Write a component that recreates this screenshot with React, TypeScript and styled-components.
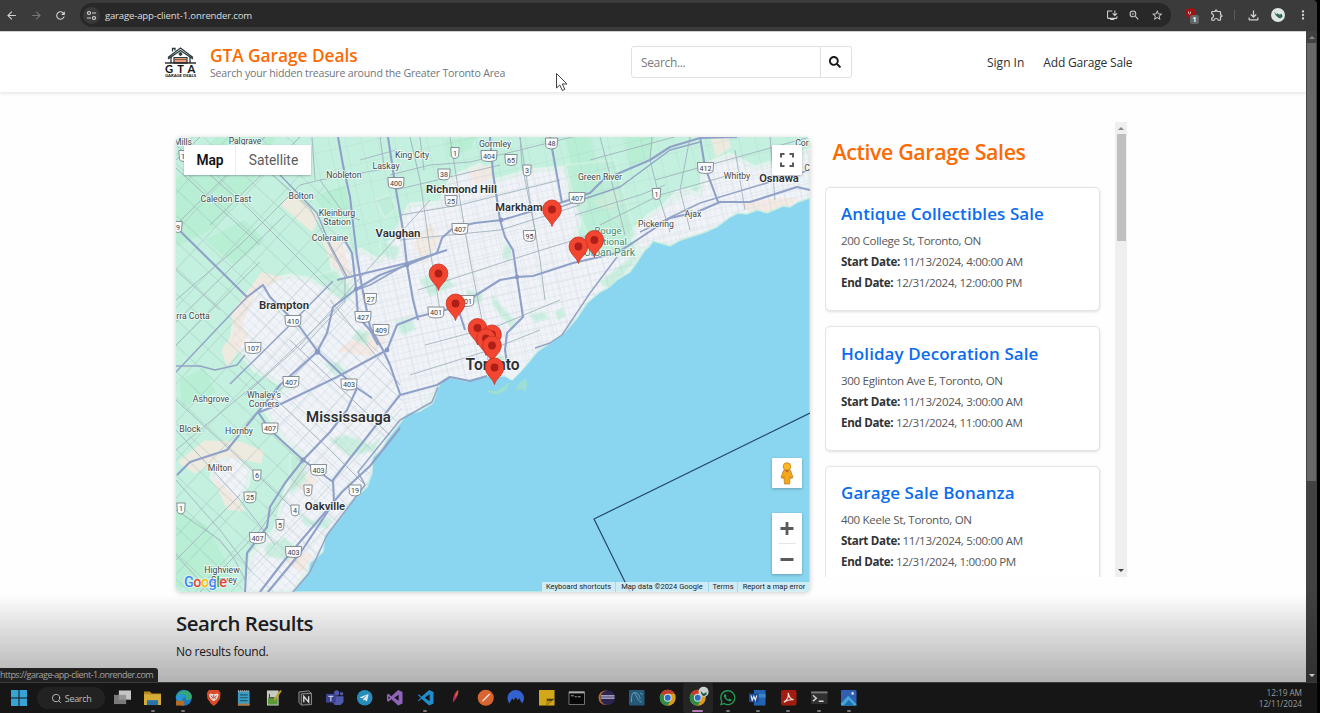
import React from 'react';
import styled, { createGlobalStyle } from 'styled-components';
import { Search } from 'lucide-react';
import { FaSearch, FaWhatsapp, FaTelegramPlane } from 'react-icons/fa';
import {
  MdArrowBack, MdArrowForward, MdRefresh, MdInstallDesktop, MdZoomIn, MdStarOutline, MdOutlineExtension,
  MdOutlineFileDownload, MdMoreVert,
} from 'react-icons/md';

const Global = createGlobalStyle`
  * { box-sizing: border-box; }
  body { margin: 0; background: #000; overflow: hidden; font-family: "Open Sans", "Noto Sans", sans-serif; }
  h1, h2, h3, p { margin: 0; }
`;

const Screen = styled.div`
  width: 1320px; height: 713px; display: flex; flex-direction: column;
  position: relative; overflow: hidden; background: #000;
`;

/* Browser bar */
const BrowserBar = styled.div`
  height: 31px; width: 1317px; flex: none; display: flex; align-items: center;
  background: #3b3b3b; padding: 0 7px 1px 5px; color: #d2d2d2; border-radius: 0 4px 0 0;
`;
const NavIcons = styled.div`
  display: flex; width: 75px; gap: 11.5px; align-items: center;
`;
const AddressBar = styled.div`
  width: 1093px; height: 24px; border-radius: 12px; background: #282828;
  display: flex; align-items: center; padding: 0 8px 0 3px;
`;
const SiteBadge = styled.span`
  width: 17px; height: 17px; border-radius: 50%; background: #3a3a3a;
  display: flex; align-items: center; justify-content: center; margin-right: 5px;
`;
const Url = styled.span`
  font-size: 9.6px; color: #dedede; flex: 1; letter-spacing: -0.17px;
`;
const AddressActions = styled.div`display: flex; gap: 10px; align-items: center;`;
const Extensions = styled.div`
  display: flex; align-items: center; flex: 1; padding-left: 14px;
`;
const Shield = styled.span`
  position: relative; width: 13px; height: 14px; margin-right: 12px; display: flex; align-items: flex-start;
`;
const ShieldCount = styled.b`
  position: absolute; left: 5px; top: 7px; width: 9px; height: 9px; border-radius: 2px;
  background: #666; color: #fff; font-size: 7px; line-height: 9px; text-align: center;
`;
const Divider = styled.i`width: 1px; height: 10px; background: #5b5b5b; margin: 0 11px 0 10px;`;
const Avatar = styled.span`margin: 0 11px 0 10px; display: flex;`;

/* Page */
const Viewport = styled.div`height: 651px; width: 1317px; flex: none; display: flex; background: #3a3a3a;`;
const Page = styled.div`
  width: 1306px; height: 651px; background: #fefefe; overflow: hidden; position: relative;
  border-top: 1px solid #d0d0d0;
`;
const Dimmer = styled.div`
  position: absolute; left: 0; right: 0; top: 562px; bottom: 0;
  background: linear-gradient(rgba(0,0,0,0), rgba(0,0,0,0.09) 28%, rgba(0,0,0,0.30)); pointer-events: none;
`;
const PageScroll = styled.div`
  width: 11px; display: flex; flex-direction: column; align-items: center; justify-content: space-between;
  background: linear-gradient(#424242 0 85%, #303030); padding-bottom: 2px;
`;
const PageThumb = styled.div`width: 9px; height: 438px; background: #686868; margin-bottom: auto;`;
const Arrow = styled.i<{ $down?: boolean; $color: string; $h: number }>`
  height: ${p => p.$h}px; display: flex; align-items: center;
  &::before {
    content: ""; border: 3px solid transparent;
    border-${p => (p.$down ? 'top' : 'bottom')}: 3px solid ${p => p.$color};
    border-${p => (p.$down ? 'bottom' : 'top')}: 0;
  }
`;

const Header = styled.header`
  height: 60px; background: #fff; box-shadow: 0 1px 4px rgba(0,0,0,0.13); position: relative;
  display: flex; align-items: center; padding-left: 164px;
`;
const Brand = styled.div`display: flex; width: 467px; gap: 13px; align-items: center;`;
const BrandText = styled.div`display: flex; flex-direction: column; padding-top: 3px;`;
const BrandName = styled.h1`
  font-size: 17.3px; line-height: 20px; font-weight: 600; color: #fa6b03; letter-spacing: -0.03px; white-space: nowrap;
`;
const Tagline = styled.p`
  font-size: 10.6px; line-height: 15px; color: #6f767c; white-space: nowrap; letter-spacing: -0.2px;
`;
const SearchBox = styled.div`
  width: 221px; height: 32px; border: 1px solid #dfe1e4; border-radius: 3px; display: flex;
  font-size: 12px; color: #777b80; align-items: center; letter-spacing: -0.35px;
`;
const SearchInput = styled.div`flex: 1; padding: 1px 0 0 9px; line-height: 30px;`;
const SearchButton = styled.div`
  width: 31px; height: 30px; border-left: 1px solid #dfe1e4; display: flex; align-items: center;
  justify-content: center; color: #17191c; padding-right: 2px;
`;
const Links = styled.nav`
  display: flex; gap: 19px; margin-left: 135px; font-size: 12px; color: #2b2f33; white-space: nowrap; padding-top: 1px;
`;
const NavLink = styled.span<{ $tight?: boolean }>`letter-spacing: ${p => (p.$tight ? -0.18 : 0)}px;`;

const Main = styled.main`
  display: flex; gap: 15px; align-items: flex-start; padding: 30px 0 0 176px;
`;
const MapBox = styled.section`
  width: 634px; height: 455px; margin-top: 15px; border-radius: 5px; overflow: hidden; position: relative;
  box-shadow: 0 1px 5px rgba(0,0,0,0.2); font-family: Roboto, sans-serif;
`;
const MapTypes = styled.div`
  position: absolute; left: 8px; top: 8px; height: 30px; display: flex; background: #fff;
  box-shadow: 0 1px 2px rgba(0,0,0,0.25); border-radius: 1px; align-items: center;
`;
const MapType = styled.span<{ $on?: boolean; $w: number }>`
  width: ${p => p.$w}px; text-align: center; font-size: 13.8px; line-height: 30px;
  font-weight: ${p => (p.$on ? 600 : 400)}; color: ${p => (p.$on ? '#111' : '#5b5b5b')};
  border-left: 1px solid ${p => (p.$on ? 'transparent' : '#eee')};
`;
const MapControl = styled.div<{ $top: number; $h?: number }>`
  position: absolute; left: 596px; top: ${p => p.$top}px; width: 30px; height: ${p => p.$h ?? 30}px;
  background: #fff; border-radius: 1px; box-shadow: 0 1px 3px rgba(0,0,0,0.25);
  display: flex; flex-direction: column; align-items: center; justify-content: center;
`;
const GoogleMark = styled.div`
  position: absolute; left: 8px; bottom: 0; font: 500 14.5px/19px Roboto, sans-serif; letter-spacing: -0.6px;
  text-shadow: 0 0 2px #fff, 0 0 2px #fff;
`;
const GLetter = styled.span<{ $c: string }>`color: ${p => p.$c};`;
const Attribution = styled.div`
  position: absolute; right: 0; bottom: 0; height: 10px; display: flex; background: rgba(225,241,247,0.78);
  font-size: 7.5px; line-height: 10px; color: #222; white-space: nowrap;
`;
const Attr = styled.span<{ $w: number }>`
  width: ${p => p.$w}px; text-align: center; border-left: 1px solid rgba(150,205,225,0.7);
  &:first-child { border-left: 0; }
`;

const Sidebar = styled.aside`
  width: 302px; height: 455px; overflow: hidden; display: flex; justify-content: space-between;
`;
const SaleList = styled.div`width: 275px; padding: 16px 0 0; flex: none;`;
const SaleHeading = styled.h2`
  font-size: 21.4px; line-height: 28px; font-weight: 600; color: #fa6b03; padding-left: 7.5px; margin-bottom: 20.5px;
  white-space: nowrap; letter-spacing: -0.4px;
`;
const Card = styled.article`
  height: 124.5px; border: 1px solid #e4e4e4; border-radius: 5px; background: #fff; margin-bottom: 15px;
  box-shadow: 0 1px 3px rgba(0,0,0,0.13); padding: 14.5px 15px; white-space: nowrap;
`;
const CardTitle = styled.h3`
  font-size: 17px; line-height: 24px; font-weight: 600; color: #0b6cee; margin-bottom: 4.2px; letter-spacing: 0.08px;
`;
const CardLine = styled.p`
  font-size: 11.6px; line-height: 21px; color: #55585b; letter-spacing: -0.33px;
  b { color: #303336; font-weight: 700; }
`;
const SideScroll = styled.div`
  width: 12px; height: 455px; background: #efefef; display: flex; flex-direction: column; align-items: center;
`;
const SideThumb = styled.div`width: 9px; height: 107px; background: #c0c0c0; margin-bottom: auto;`;

const Results = styled.section`padding: 15px 0 0 176px; color: #1c2126;`;
const ResultsTitle = styled.h2`font-size: 20.4px; line-height: 32px; font-weight: 600; letter-spacing: -0.45px;`;
const ResultsText = styled.p`font-size: 12px; line-height: 18px; margin-top: 4px; letter-spacing: -0.25px;`;

const StatusTip = styled.div`
  position: absolute; left: 0; top: 668px; width: 158px; height: 14px; background: #212121; color: #a3a3a3;
  font-size: 9px; line-height: 14px; border-top-right-radius: 3px; white-space: nowrap; letter-spacing: -0.52px;
`;
const Cursor = styled.svg`position: absolute; left: 555px; top: 72px;`;

const Taskbar = styled.footer`
  height: 31px; flex: none; background: #161616; border-top: 1px solid #3b3b3b; display: flex; align-items: center;
  padding-left: 4px; position: relative; width: 1317px;
`;
const TaskSlot = styled.div<{ $active?: boolean }>`
  width: 30.25px; height: 30px; display: flex; align-items: center; justify-content: center;
  flex: none; background: ${p => (p.$active ? '#242424' : 'transparent')}; border-radius: 3px; position: relative;
`;
const RunningMark = styled.i<{ $active?: boolean }>`
  position: absolute; bottom: 1px; width: ${p => (p.$active ? 11 : 4)}px; height: 2px; border-radius: 1px;
  background: ${p => (p.$active ? '#b57bb8' : '#777')};
`;
const TaskSearch = styled.div`
  width: 68px; height: 22px; border-radius: 11px; background: #222; display: flex; align-items: center; gap: 3px;
  margin: 0 3px 0 2.5px; padding-left: 14px; color: #bdbdbd; font-size: 9px; flex: none; letter-spacing: -0.3px;
`;
const Clock = styled.div`
  margin-left: auto; padding-right: 15px; text-align: right; font-size: 8.3px; line-height: 11px; color: #9b9b9b;
  white-space: nowrap; letter-spacing: -0.08px;
`;

const WATER = 'M810 198 L798 202 790 207 783 206 767 213 757 210 747 214 738 213 730 217 717 227 703 233 690 237 681 240 670 246 660 243 653 241 649 247 645 250 637 262 630 272 617 280 608 288 600 292 587 303 577 318 565 332 550 343 537 352 528 363 520 372 512 380 505 376 487 376 467 381 447 377 440 384 437 390 433 403 420 411 407 414 397 427 387 440 381 450 373 457 372 473 367 487 356 497 350 503 340 518 325 536 323 552 310 563 308 573 293 592 810 592Z';

const URBAN = [
  'M395 235 L410 205 440 203 452 178 480 165 492 182 530 171 565 168 568 195 585 205 576 232 580 245 612 258 645 250 560 350 500 380 440 385 370 480 293 592 245 592 252 555 275 530 290 480 305 455 285 440 262 405 290 388 255 370 232 340 236 312 258 283 290 276 320 282 350 280 360 250 380 262Z',
  'M640 250 L630 235 650 215 690 190 665 205 680 190 700 195 705 165 730 155 755 168 780 160 810 150 810 205 720 228 680 243Z',
  'M215 462 L233 455 250 470 247 485 235 505 224 490 212 478Z',
  'M344 240 L355 260 352 285 334 272 330 250Z',
];

const SAND = [
  'M283 205 L292 192 317 217 312 230Z', 'M232 315 L262 274 280 278 255 290 236 335Z', 'M223 350 L240 325 247 335 228 365Z',
  'M180 462 L205 442 240 443 262 452 260 462 225 455 195 472Z', 'M215 480 L237 500 243 510 228 508Z',
  'M415 245 L430 225 438 240 425 262Z', 'M340 350 L362 335 385 340 370 355Z', 'M595 202 l20 -12 8 12 -14 8Z',
  'M743 204 L775 200 795 199 780 212 755 214Z', 'M285 553 L310 555 302 570 288 562Z', 'M323 240 l15 -5 12 40 -15 -8Z',
  'M470 172 l20 -6 3 10 -18 8Z', 'M300 470 l15 10 -8 10 -12 -4Z', 'M712 137 l15 0 2 10 -12 8Z',
];

const PARKS = [
  'M310 277 L335 270 355 292 345 302 320 285Z', 'M265 545 L285 538 300 550 288 560 266 556Z', 'M330 440 L345 435 372 445 380 438 375 450 350 456Z',
  'M380 240 l20 8 -5 12 -14 -6Z', 'M357 330 l12 3 -2 12 -14 -6Z', 'M375 200 l14 -6 8 14 -12 10Z', 'M300 515 l12 6 20 -3 -5 10 -22 -3Z',
  'M420 280 l22 -12 12 18 -24 10Z', 'M530 315 l14 -3 4 6 -12 4Z', 'M555 312 l7 -4 3 8 -7 4Z', 'M492 295 l10 12 14 15 -3 8 -20 -25Z',
  'M600 282 L640 250 634 262 610 290Z', 'M565 165 l50 -5 20 75 -15 12 -28 -4 -14 -30Z', 'M727 235 l8 -22 6 4 -4 12Z', 'M450 395 l-10 -10 8 -4 6 5Z',
  'M290 455 l14 3 2 22 -15 14Z', 'M467 290 l16 4 -4 10 -12 -4Z', 'M505 245 l8 2 -4 14 -6 -4Z', 'M395 322 l16 -5 4 12 -12 6Z', 'M325 363 l14 0 8 10 -12 2Z', 'M495 355 l9 2 3 12 -8 -3Z',
];

const SHADE = [
  'M176 180 l40 -43 60 0 -20 40 -40 50 -40 20Z', 'M315 197 l30 -12 6 30 -20 10Z', 'M176 510 l30 15 25 45 -20 22 -35 -5Z',
  'M565 137 l24 0 20 80 20 15 -35 20 -10 -30Z', 'M445 140 l30 -3 -4 12 -22 8Z', 'M625 137 l30 0 -5 20 -20 10Z', 'M205 240 l40 -20 20 20 -30 25Z', 'M180 380 l24 -12 12 24 -34 16Z',
];

const MAJOR = [
  '388 137 396 190 403 230 407 265 413 300 418 320',
  '338 137 343 165 350 197 357 257 362 287 370 327 383 350 390 365 400 394',
  '343 237 352 253 356 287 358 317 370 330 378 345',
  '810 190 797 187 750 202 720 202 697 212 670 218 637 240 617 253 573 263 533 276 517 277 500 280 473 297 453 308 417 317 397 325 387 350 337 377 283 403 257 413 227 450 190 462 177 475',
  '737 137 700 138 670 147 650 160 603 180 590 193 560 203 502 220 475 223 453 228 442 238 437 253 407 265 380 275 355 290 333 307 327 333 317 352 280 385 258 412 270 430 303 460 285 483 270 507 267 527 247 553 245 592',
  '490 137 493 173 500 220 505 237 513 250 517 277 523 317 507 333 505 350 508 368',
  '176 227 247 297 263 285 270 297 300 327 318 352 340 373 357 388 372 398',
  '260 592 283 562 327 510 342 492 370 466 400 428',
  '268 592 301 552 334 502 333 480 370 433 400 395 437 385 450 377 470 381 487 376',
  '357 388 347 410 330 432 303 460', '303 460 333 482',
  '700 137 705 167 718 202', '550 137 562 203',
  '337 280 407 263 447 250', '458 308 465 330',
];

const SECONDARY = [
  '617 257 590 293 570 323 562 335 550 343 535 348', '280 175 317 213 330 245 347 277', '247 297 176 372', '333 281 285 330 230 384',
  '176 366 200 366 215 370 237 365 245 355', '640 232 700 203 810 170', '560 207 620 187 670 150 700 142', '405 265 370 285 356 290',
  '293 592 310 572 327 535 365 485 358 472 400 420 432 402 438 387',
];

const MEDIUM = [
  '176 145 250 210 330 290', '176 168 260 245', '230 137 310 208 345 277', '176 270 220 310', '176 300 240 245 300 185 320 180 390 168',
  '176 345 260 262', '176 322 285 215', '200 137 176 160', '265 137 176 225', '300 137 210 225', '430 200 300 345 245 395',
  '360 220 345 215 320 180', '176 400 225 445 300 515', '176 430 240 500 275 545', '176 480 220 530 250 570', '176 510 220 540 235 560 245 580',
  '200 592 260 530 310 460', '176 560 240 495', '210 592 176 555', '176 450 260 380 345 300', '240 366 330 450 365 485', '290 340 400 445',
  '317 352 270 400', '345 277 345 302 300 350', '330 300 400 385', '395 190 500 165', '410 137 420 180 430 250 440 310', '450 137 460 200 470 260 482 320 488 360',
  '520 137 530 200 540 260 545 300', '520 137 522 165 535 230', '390 175 430 165 470 162 520 150 600 130', '400 215 460 205 560 180', '600 137 610 175 625 235',
  '652 137 650 160 660 200 670 232', '590 160 700 130', '600 225 660 195 740 172', '420 137 424 170', '575 215 640 195 665 185', '690 137 680 190 690 230', '735 150 745 210',
  '770 137 775 200', '400 240 500 230 580 205', '418 290 510 260 590 235', '425 345 500 325 560 300', '410 375 490 350 540 330',
  '380 137 384 165', '312 137 315 180', '360 160 396 150', '655 180 810 137',
];

type Label = [string, number, number, number, boolean?, string?];
const LABELS: Label[] = [
  ['Mills', 183, 145, 8.5], ['Palgrave', 245, 143.5, 8.5], ['Caledon East', 226, 202, 8.7], ['Nobleton', 344, 177.5, 8.7], ['Bolton', 301, 199, 8.7],
  ['Kleinburg', 337, 216, 8.7], ['Station', 337, 225, 8.7], ['Coleraine', 330, 241, 8.7], ['Laskay', 386, 169, 8.7], ['King City', 412, 157.5, 8.7],
  ['Richmond Hill', 461.5, 192.5, 11.3, true], ['Vaughan', 398, 237, 11.4, true], ['Markham', 519, 211, 11.1, true], ['Brampton', 284, 309, 11.4, true],
  ['rra Cotta', 193, 319, 8.7], ['Ashgrove', 211, 402, 8.7], ['Whaley\u2019s', 264, 398, 8.7], ['Corners', 264, 407, 8.7], ['Block', 190, 432, 8.7],
  ['Hornby', 239, 434, 8.7], ['Milton', 220, 471, 8.7], ['Mississauga', 348.5, 422, 15, true], ['Oakville', 325, 510, 11.3, true],
  ['Highview', 222, 573, 8.7], ['Survey', 224, 582.5, 8.7], ['Gormley', 495, 147, 8.7], ['Green River', 600, 180, 8.7], ['Whitby', 737, 179, 8.7],
  ['Osnawa', 779, 182, 11.1, true], ['Ajax', 693, 217, 8.7], ['Pickering', 656, 226.5, 8.7], ['Cor', 802, 146, 8.7], ['C', 807, 171, 8.7],
  ['Rouge', 608, 234, 9.6, false, '#3d8c73'], ['National', 609, 245, 9.6, false, '#3d8c73'], ['Urban Park', 609.5, 255.5, 10.4, false, '#3d8c73'],
  ['Toronto', 492.5, 370, 15.6, true],
];

type RoadSign = [string, number, number];
const SIGNS: RoadSign[] = [
  ['1', 183, 156], ['400', 396, 183], ['38', 444, 174.5], ['1', 455, 153], ['404', 489, 156], ['65', 511, 160], ['3', 527, 170.5], ['48', 551.5, 143.5],
  ['25', 451, 201], ['407', 460, 229], ['407', 577, 198], ['1', 656.5, 194], ['412', 705.5, 168], ['95', 529.5, 236], ['27', 370.5, 299], ['427', 363, 317],
  ['409', 381, 330], ['410', 293, 321], ['107', 253, 348], ['401', 436, 312.5], ['401', 466, 301], ['407', 291, 382], ['403', 349, 384.5], ['407', 270, 428.5],
  ['403', 318.5, 470], ['3', 308, 490.5], ['19', 355, 490.5], ['6', 257, 475.5], ['25', 250, 497.5], ['1', 181, 508.5], ['4', 295, 510.5],
  ['5', 280, 525], ['407', 257.5, 538], ['403', 293.5, 552], ['9', 178, 227],
];

const PINS: [number, number][] = [
  [552, 226.5], [594.3, 257], [578.4, 263.5], [438.5, 290.5], [455.5, 320.5], [477.5, 345], [492, 351.5], [486, 355.5], [492, 362.5], [494.5, 384.5],
];

function MapDrawing() {
  return (
    <svg width="634" height="455" viewBox="176 137 634 455" display="block">
      <defs>
        <pattern id="westFine" width="6.5" height="8" patternUnits="userSpaceOnUse" patternTransform="rotate(-47)">
          <path d="M0 0H6.5M0 0V8" stroke="#ccd1de" strokeWidth=".6" />
        </pattern>
        <pattern id="westCoarse" width="19" height="26" patternUnits="userSpaceOnUse" patternTransform="rotate(-47)">
          <path d="M0 0H19M0 0V26" stroke="#96afae" strokeWidth="1" />
        </pattern>
        <pattern id="eastFine" width="5.5" height="7" patternUnits="userSpaceOnUse" patternTransform="rotate(-13)">
          <path d="M0 0H5.5M0 0V7" stroke="#d3d8e2" strokeWidth=".6" />
        </pattern>
        <pattern id="eastCoarse" width="16" height="20" patternUnits="userSpaceOnUse" patternTransform="rotate(-13)">
          <path d="M0 0H16M0 0V20" stroke="#a2b5ba" strokeWidth=".8" />
        </pattern>
        <clipPath id="urbanClip">{URBAN.map(d => <path key={d} d={d} />)}</clipPath>
        <clipPath id="west"><path d="M176 137H300L352 250 372 330 402 400 400 592H176Z" /></clipPath>
        <clipPath id="east"><path d="M300 137H810V592H400L402 400 372 330 352 250Z" /></clipPath>
        <g id="pin">
          <path d="M0 0C-1.2-6-9.3-9.3-9.3-17.2A9.3 9.3 0 0 1 9.3-17.2C9.3-9.3 1.2-6 0 0Z" fill="#f34631" stroke="#c5301f" strokeWidth=".8" />
          <circle cy="-17" r="3.900" fill="#ad1f17" />
        </g>
      </defs>
      <rect x="176" y="137" width="634" height="455" fill="#c4f1df" />
      {SHADE.map(d => <path key={d} d={d} fill="#b3eccf" opacity=".7" />)}
      {URBAN.map(d => <path key={d} d={d} fill="#f0f3f8" stroke="#e4f2ee" strokeWidth="5" strokeLinejoin="round" />)}
      {SAND.map(d => <path key={d} d={d} fill="#f5e9e0" stroke="#f5e9e0" strokeWidth="3" strokeLinejoin="round" opacity=".85" />)}
      {PARKS.map(d => <path key={d} d={d} fill="#bdeed7" opacity=".75" stroke="#d3f2e4" strokeWidth="2" strokeLinejoin="round" />)}
      <g clipPath="url(#west)">
        <rect x="176" y="137" width="634" height="455" fill="url(#westCoarse)" opacity=".6" />
        <g clipPath="url(#urbanClip)"><rect x="176" y="137" width="634" height="455" fill="url(#westFine)" /></g>
      </g>
      <g clipPath="url(#east)">
        <rect x="176" y="137" width="634" height="455" fill="url(#eastCoarse)" opacity=".42" />
        <g clipPath="url(#urbanClip)"><rect x="176" y="137" width="634" height="455" fill="url(#eastFine)" /></g>
      </g>
      <g fill="none" stroke="#a3b3be" strokeWidth=".9">{MEDIUM.map(p => <polyline key={p} points={p} />)}</g>
      <path d={WATER} fill="#8ad5ef" stroke="#c5eee2" strokeWidth="1.4" />
      <path d="M487 390q7 4 12 0q6-3 10-7q-2 7-9 10q-8 2-13-3zM516 390l3-6 6-5q3 5 0 12l-4-3z" fill="#9bdedb" stroke="#a5e3c4" strokeWidth="1" />
      <path d="M505 376l7 4 8-8 6-7-12-2z" fill="#eef2f5" />
      <g fill="none" stroke="#95a4c6" strokeWidth="1.5" strokeLinejoin="round">{SECONDARY.map(p => <polyline key={p} points={p} />)}</g>
      <g fill="none" stroke="#90a1c9" strokeWidth="2.1" strokeLinejoin="round">{MAJOR.map(p => <polyline key={p} points={p} />)}</g>
      <g fill="#8898c4">
        <circle cx="407" cy="265" r="2.4" /><circle cx="317.5" cy="352" r="2.8" /><circle cx="356" cy="289" r="2.3" />
        <circle cx="387" cy="350" r="2.4" /><circle cx="303" cy="460" r="2.5" /><circle cx="517" cy="277" r="2.3" /><circle cx="501" cy="220" r="2.4" />
      </g>
      <polyline points="810,413 594,519 625,582 630,592" fill="none" stroke="#24476a" strokeWidth="1.2" />
      <g textAnchor="middle" fontFamily="Roboto, sans-serif">
        {SIGNS.map(([t, x, y], i) => {
          const w = t.length * 3.9 + 4.5;
          return (
            <g key={i} transform={`translate(${x} ${y})`}>
              <path d={`M${-w / 2} -5.5H${w / 2}L${w / 2 - 0.6} 3Q${w / 2 - 1} 5.2 0 5.5Q${-w / 2 + 1} 5.2 ${-w / 2 + 0.6} 3Z`} fill="#fafbfc" stroke="#7c838a" strokeWidth=".9" />
              <text y="2.7" fontSize="7.2" fill="#3f4347">{t}</text>
            </g>
          );
        })}
        {LABELS.map(([t, x, y, s, bold, c]) => (
          <text key={t} x={x} y={y} fontSize={s} fontWeight={bold ? 600 : 400} fill={c ?? (bold ? '#2c3033' : '#45494c')}
            stroke="#fff" strokeOpacity=".7" strokeWidth="1.8" paintOrder="stroke">{t}</text>
        ))}
      </g>
      {PINS.map(([x, y]) => <use key={`${x}-${y}`} href="#pin" x={x} y={y} />)}
    </svg>
  );
}

const Logo = () => (
  <svg width="33" height="32" viewBox="0 0 33 32" fill="none" stroke="#2b3a3d">
    <path d="M4 11.5 16.5 2 29 11.5M4 13 16.5 4.500 29 13" strokeWidth="1.3" />
    <path d="M8.500 5.500V2.500h2.500v2M7 11v6M26 11v6" strokeWidth="1.3" />
    <circle cx="16.5" cy="8" r="1.4" fill="#2b3a3d" />
    <path d="M10 17v-5.5h13V17z" fill="#eda07e" strokeWidth="1.2" />
    <path d="M11 13.5h11" stroke="#333" strokeWidth=".6" />
    <path d="M1 17h31" stroke="#111" strokeWidth="1.3" />
    <g fill="#151515" stroke="none" fontFamily="Lato, sans-serif" textAnchor="middle" fontWeight="700">
      <text x="5" y="26.8" fontSize="11.2">G</text><text x="16.5" y="26.8" fontSize="11.2">T</text><text x="27.5" y="26.8" fontSize="11.2">A</text>
      <text x="16.5" y="30.8" fontSize="4.2" fontWeight="900" textLength="31">GARAGE DEALS</text>
    </g>
  </svg>
);

const Chrome = () => (
  <g>
    <circle cx="9" cy="9" r="8.2" fill="#d99c1d" />
    <path d="M9 9 1.9 4.9A8.2 8.2 0 0 1 16.1 4.9H9Z" fill="#c53b2c" />
    <path d="M9 9 1.9 4.9A8.2 8.2 0 0 0 8.8 17.2L12.5 11Z" fill="#2c8b48" />
    <circle cx="9" cy="9" r="4" fill="#ddd" /><circle cx="9" cy="9" r="3" fill="#2c6cc9" />
  </g>
);

const ICONS: Record<string, React.ReactNode> = {
  windows: <g fill="#36a4d4"><path d="M1 1h7.500v7.500H1zM9.500 1H17v7.500H9.500zM1 9.500h7.500V17H1zM9.500 9.500H17V17H9.500z" /></g>,
  taskview: <g><path d="M5 1.500h12.500v9.500H5z" fill="#c5c5c5" /><path d="M0 6h12.500v9.500H0z" fill="#8c8c8c" opacity=".85" /></g>,
  folder: <g><path d="M0 2.500h6l2 2h9.500V16H0z" fill="#b8891d" /><path d="M0 5.500h17.500V16.500H0z" fill="#d6ab36" /><path d="M3 11.500h11.500v5H3z" fill="#2873ad" /></g>,
  edge: <g><circle cx="9" cy="9" r="8.3" fill="#1f79bd" /><path d="M1 8C3 1 13-1 16.500 5 19 11 15 12 11 11 13 7 9 5 6 6 3 6 1 8 1 8Z" fill="#38a777" /><path d="M1 8C5 3 12 5 11 9 9 8 7 9 7 13 3 14 1 11 1 8Z" fill="#2596d8" /><path d="M1 12h8.500v5H1z" fill="#b66c24" /></g>,
  brave: <g><path d="M4 1h10l2 3-.5 6L12 15l-3 2.500L6 15 2.500 10 2 4Z" fill="#d94b29" /><path d="m5 4.500 4 .8 4-.8 1 2-2 4-3 2-3-2-2-4Z" fill="#e5ddd8" /><path d="m6 7 2 1.500L7 10M12 7l-2 1.500 1 1.500M9 6v4" stroke="#c84427" fill="none" /></g>,
  notepad: <g><path d="M3 2h12v15H3z" fill="#3b9dc2" /><path d="M3 15h12v2H3z" fill="#b87a3b" /><path d="M5 6h8M5 9h8M5 12h8" stroke="#1b5873" strokeWidth="1.2" /><path d="M3 2h12" stroke="#aaa" strokeWidth="2" strokeDasharray="1 1" /></g>,
  notepp: <g><path d="M2 1.500h12V17H2z" fill="#c6ccc2" /><path d="M3 9h10v7H3z" fill="#5b9938" /><path d="M4.500 5v4h5" stroke="#333" fill="none" /><path d="m16.500 1.500-7 10" stroke="#c29e20" strokeWidth="2" /></g>,
  notion: <g><path d="m3 3 10-1 3 2.500V16L5.500 16.500 3 14Z" fill="#262626" stroke="#8d8d8d" /><path d="M5.500 5 16 4.500M5.500 5v11.500" stroke="#8d8d8d" /><path d="M8 13.500V7.500l5 6V7.500" fill="none" stroke="#ddd" strokeWidth="1.4" /></g>,
  teams: <g fill="#5059ad"><circle cx="11" cy="4" r="2.7" /><circle cx="16" cy="5" r="1.8" /><path d="M7 7.500h11v6l-3 3H9l-2-3Z" /><path d="M0 5h10v9H0z" fill="#3b4393" /><path d="M2.500 7.500h5M5 7.500v5" stroke="#ccd" strokeWidth="1.2" /></g>,
  telegram: <g><circle cx="9" cy="9" r="8" fill="#258cbc" /><FaTelegramPlane x="3.500" y="4" size={10} color="#dfe8ec" /></g>,
  vs: <path d="M12.500 1 17 3v12l-4.500 2-7-6.500L2.500 13 1 12V6l1.500-1 3 2.500ZM13 6 8.500 9 13 12ZM2.500 7.500v3L4.200 9Z" fill="#8f63b8" fillRule="evenodd" />,
  vscode: <path d="M12.500 1 17 3v12l-4.500 2-8-7L2 12.500 1 11.700 4 9 1 6.300 2 5.500 4.500 8ZM13 5.500 8 9l5 3.500Z" fill="#238bcb" fillRule="evenodd" />,
  feather: <g><path d="M6 14C6 8 8 3 11.500 1 12.500 4 10 10 6 14Z" fill="#b52e55" /><path d="M9 4.500 11.500 1 11 6 8 9Z" fill="#d5652b" /></g>,
  postman: <g><circle cx="9" cy="9" r="8.3" fill="#d8642f" /><path d="m4.500 13.500 2-3 6-6 1.300 1-6 6Z" fill="#eadcd4" /></g>,
  nord: <path d="M2.500 15A8.500 8.500 0 1 1 15.500 15L12.500 9.500l-1.500 2L9 8.500 7 11.500 5.500 9.500Z" fill="#3162cf" />,
  sticky: <g><path d="M1 1h16v16H1z" fill="#d2a719" /><path d="M9 17V10h8" fill="#4b3d16" /><path d="M9 17v-5h5z" fill="#b18b12" /></g>,
  cmd: <g><path d="M1 3h16v13H1z" fill="#070707" stroke="#777" /><path d="M1 3.500h16" stroke="#aaa" strokeWidth="2" /><path d="M3 7h3M7 8h2M10 8h3" stroke="#aaa" /></g>,
  eclipse: <g><circle cx="8" cy="9" r="7.5" fill="#b66c27" /><circle cx="10" cy="9" r="7.5" fill="#2b2552" /><path d="M3 7h14M3 9.500h14" stroke="#c6c0dc" strokeWidth="1.3" /></g>,
  mysql: <g><rect x="1" y="1" width="16" height="16" rx="1" fill="#24597a" /><path d="M3.500 13.500C3.500 7 4.500 3.500 6 4c3 1 3 8 8 9.500M6 4c4-1 6 3 6.500 6M12.500 4l2.500 1.500" fill="none" stroke="#6fa3ba" strokeWidth="1" /></g>,
  chrome: <Chrome />,
  profile: <g><Chrome /><circle cx="15" cy="3" r="5.2" fill="#c9d3cf" /><path d="m12 2 3 3 3-2v3l-3 1.500-2-1.500Z" fill="#28594e" /></g>,
  whatsapp: <FaWhatsapp size={18} color="#239e52" />,
  word: <g><path d="M5 1h12v16H5z" fill="#2463b1" /><path d="M5 5h12v4H5z" fill="#3c83cd" /><path d="M0 4.500h10v9H0z" fill="#174991" /><path d="m2 6.500 1.300 5L5 7.500l1.500 4 1.500-5" stroke="#e5e8ef" fill="none" strokeWidth="1.2" /></g>,
  acrobat: <g><rect x="1" y="1" width="16" height="16" rx="2" fill="#a31c11" /><path d="M4 13.500C8 11 9 8 8.500 4c.5 4 2 6.500 5.500 7-4-.5-7 .5-10 2.500Z" fill="none" stroke="#eaded9" strokeWidth="1.3" /></g>,
  terminal: <g><path d="M1 2.500h17v13H1z" fill="#303030" /><path d="M1 3.500h17" stroke="#777" strokeWidth="2" /><path d="m3 6.500 3.500 3L3 12.500M9 12.500h5" fill="none" stroke="#d0d0d0" strokeWidth="1.5" /></g>,
  photos: <g><rect x="1" y="1" width="16" height="16" rx="1.5" fill="#315fb2" /><path d="M1 15 8.500 7 17 16v1H1Z" fill="#45a7d5" /><path d="M4 17 9 11l5.500 6Z" fill="#1b70ae" /><circle cx="13" cy="4.500" r="1.4" fill="#d3d9e8" /></g>,
};
const TASKS: [string, boolean][] = [
  ['taskview', false], ['folder', true], ['edge', true], ['brave', false], ['notepad', false], ['notepp', false], ['notion', false], ['teams', false],
  ['telegram', false], ['vs', false], ['vscode', true], ['feather', false], ['postman', false], ['nord', false], ['sticky', false], ['cmd', false],
  ['eclipse', false], ['mysql', false], ['chrome', false], ['profile', true], ['whatsapp', true], ['word', true], ['acrobat', true], ['terminal', true], ['photos', true],
];

const SALES = [
  { title: 'Antique Collectibles Sale', where: '200 College St, Toronto, ON', start: '11/13/2024, 4:00:00 AM', end: '12/31/2024, 12:00:00 PM' },
  { title: 'Holiday Decoration Sale', where: '300 Eglinton Ave E, Toronto, ON', start: '11/13/2024, 3:00:00 AM', end: '12/31/2024, 11:00:00 AM' },
  { title: 'Garage Sale Bonanza', where: '400 Keele St, Toronto, ON', start: '11/13/2024, 5:00:00 AM', end: '12/31/2024, 1:00:00 PM' },
];

const GOOGLE: [string, string][] = [['G', '#4285f4'], ['o', '#ea4335'], ['o', '#fbbc05'], ['g', '#4285f4'], ['l', '#34a853'], ['e', '#ea4335']];

export default function App() {
  return (
    <Screen>
      <Global />
      <BrowserBar>
        <NavIcons>
          <MdArrowBack size={13} /><MdArrowForward size={13} color="#777" /><MdRefresh size={13} />
        </NavIcons>
        <AddressBar>
          <SiteBadge>
            <svg width="11" height="11" viewBox="0 0 11 11" fill="none" stroke="#d2d2d2" strokeWidth="1.2">
              <circle cx="3" cy="3" r="1.5" /><path d="M6 3h4M1 8h4" /><circle cx="8" cy="8" r="1.5" />
            </svg>
          </SiteBadge>
          <Url>garage-app-client-1.onrender.com</Url>
          <AddressActions><MdInstallDesktop size={12.5} /><MdZoomIn size={12.5} /><MdStarOutline size={12.5} /></AddressActions>
        </AddressBar>
        <Extensions>
          <Shield>
            <svg width="12" height="12" viewBox="0 0 12 12"><path d="M1 1.500 6 0l5 1.500V6q0 3-5 5.500Q1 9 1 6Z" fill="#a11313" /><path d="M3.500 3.500v2q1.300 1 2 0v-2" stroke="#ddd" fill="none" strokeWidth=".8" /></svg>
            <ShieldCount>1</ShieldCount>
          </Shield>
          <MdOutlineExtension size={14} /><Divider /><MdOutlineFileDownload size={15} />
          <Avatar>
            <svg width="14" height="14" viewBox="0 0 14 14"><circle cx="7" cy="7" r="7" fill="#dfe7e4" /><path d="m3 3.500 2.500 3L6 5l2 1.500L11 6l.500 3L9 10.500 7 9.500 4.500 7Z" fill="#33675c" /></svg>
          </Avatar>
          <MdMoreVert size={14} />
        </Extensions>
      </BrowserBar>

      <Viewport>
        <Page>
          <Header>
            <Brand>
              <Logo />
              <BrandText>
                <BrandName>GTA Garage Deals</BrandName>
                <Tagline>Search your hidden treasure around the Greater Toronto Area</Tagline>
              </BrandText>
            </Brand>
            <SearchBox>
              <SearchInput>Search...</SearchInput>
              <SearchButton><FaSearch size={12} /></SearchButton>
            </SearchBox>
            <Links><NavLink>Sign In</NavLink><NavLink $tight>Add Garage Sale</NavLink></Links>
          </Header>

          <Main>
            <MapBox>
              <MapDrawing />
              <MapTypes><MapType $on $w={51}>Map</MapType><MapType $w={76}>Satellite</MapType></MapTypes>
              <MapControl $top={8}>
                <svg width="14" height="14" viewBox="0 0 14 14" fill="none" stroke="#5a5a5a" strokeWidth="2"><path d="M1 4.500V1h3.500M9.500 1H13v3.500M13 9.500V13H9.500M4.500 13H1V9.500" /></svg>
              </MapControl>
              <MapControl $top={321}>
                <svg width="14" height="23" viewBox="0 0 14 23"><path d="M3.500 8.500h7l2.500 7-2 1-.8-2-.7 7.500H4.500l-.7-7.500-.8 2-2-1Z" fill="#f3a81c" stroke="#b87512" strokeWidth=".7" /><circle cx="7" cy="4.500" r="3.8" fill="#fbb922" stroke="#b87512" strokeWidth=".7" /><path d="m5 8.500 2 2 2-2" fill="#d5512e" /></svg>
              </MapControl>
              <MapControl $top={376} $h={61}>
                <svg width="30" height="61" viewBox="0 0 30 61" stroke="#5a5a5a" strokeWidth="2.8"><path d="M8.500 15.500h13M15 9v13M8.500 46.500h13" /><path d="M6 30.500h18" stroke="#e6e6e6" strokeWidth="1" /></svg>
              </MapControl>
              <GoogleMark>{GOOGLE.map(([l, c], i) => <GLetter key={i} $c={c}>{l}</GLetter>)}</GoogleMark>
              <Attribution>
                <Attr $w={73}>Keyboard shortcuts</Attr><Attr $w={93}>Map data ©2024 Google</Attr><Attr $w={29}>Terms</Attr><Attr $w={73}>Report a map error</Attr>
              </Attribution>
            </MapBox>
            <Sidebar>
              <SaleList>
                <SaleHeading>Active Garage Sales</SaleHeading>
                {SALES.map(s => (
                  <Card key={s.title}>
                    <CardTitle>{s.title}</CardTitle>
                    <CardLine>{s.where}</CardLine>
                    <CardLine><b>Start Date:</b> {s.start}</CardLine>
                    <CardLine><b>End Date:</b> {s.end}</CardLine>
                  </Card>
                ))}
              </SaleList>
              <SideScroll>
                <Arrow $h={12} $color="#888" /><SideThumb /><Arrow $h={13} $down $color="#444" />
              </SideScroll>
            </Sidebar>
          </Main>
          <Results>
            <ResultsTitle>Search Results</ResultsTitle>
            <ResultsText>No results found.</ResultsText>
          </Results>
          <Dimmer />
        </Page>
        <PageScroll>
          <Arrow $h={12} $color="#8a8a8a" /><PageThumb /><Arrow $h={10} $down $color="#c8c8c8" />
        </PageScroll>
      </Viewport>

      <Taskbar>
        <TaskSlot><svg width="18" height="18" viewBox="0 0 18 18">{ICONS.windows}</svg></TaskSlot>
        <TaskSearch><Search size={11} />Search</TaskSearch>
        {TASKS.map(([name, running]) => (
          <TaskSlot key={name} $active={name === 'profile'}>
            <svg width="17.5" height="17.5" viewBox="0 0 18 18" overflow="visible">{ICONS[name]}</svg>
            {running && <RunningMark $active={name === 'profile'} />}
          </TaskSlot>
        ))}
        <Clock>12:19 AM<br />12/11/2024</Clock>
      </Taskbar>

      <StatusTip>https://garage-app-client-1.onrender.com</StatusTip>
      <Cursor width="14" height="21" viewBox="0 0 14 21"><path d="M1.500 1.500V16l3.300-3 2.500 5.500 2.500-1.200-2.500-5.300h4.700Z" fill="#fff" stroke="#444" strokeWidth="1" /></Cursor>
    </Screen>
  );
}
